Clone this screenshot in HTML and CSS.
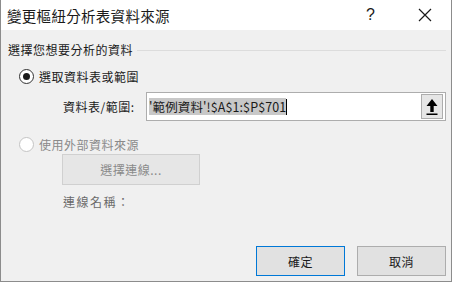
FILE: index.html
```html
<!DOCTYPE html>
<html lang="zh-Hant">
<head>
<meta charset="utf-8">
<link rel="stylesheet" href="styles.css">
</head>
<body>
<div class="dialog">
  <div class="titlebar">
    <span class="title">變更樞紐分析表資料來源</span>
    <span class="help">?</span>
    <span class="close">
      <svg width="14" height="14" viewBox="0 0 14 14"><path d="M1 1 L13 13 M13 1 L1 13" stroke="#1a1a1a" stroke-width="1.2" fill="none"/></svg>
    </span>
  </div>
  <div class="content">
    <div class="group-head">
      <span>選擇您想要分析的資料</span>
      <span class="rule"></span>
    </div>
    <div class="radio-row">
      <span class="radio checked"><span class="dot"></span></span>
      <span>選取資料表或範圍</span>
    </div>
    <div class="range-row">
      <span class="range-label">資料表/範圍:</span>
      <div class="range-input">
        <span class="sel">'範例資料'!$A$1:$P$701</span><span class="caret"></span>
        <span class="pick">
          <svg width="14" height="18" viewBox="0 0 14 18"><path d="M7 1 L1.5 8 L5.3 8 L5.3 14 L8.7 14 L8.7 8 L12.5 8 Z" fill="#000"/><rect x="1.5" y="15.5" width="11" height="1.5" fill="#000"/></svg>
        </span>
      </div>
    </div>
    <div class="radio-row disabled">
      <span class="radio"></span>
      <span>使用外部資料來源</span>
    </div>
    <div class="btn conn">選擇連線...</div>
    <div class="conn-name">連線名稱：</div>
    <div class="footer">
      <div class="btn ok">確定</div>
      <div class="btn cancel">取消</div>
    </div>
  </div>
</div>
</body>
</html>
```
FILE: styles.css
```css
html, body {
  margin: 0;
  padding: 0;
  width: 452px;
  height: 282px;
  overflow: hidden;
  font-family: "Noto Sans CJK TC", "Noto Sans", sans-serif;
  color: #1a1a1a;
}
.dialog {
  box-sizing: border-box;
  width: 452px;
  height: 282px;
  border: 1px solid #8c8c8c;
  border-top: none;
  display: flex;
  flex-direction: column;
  background: #f0f0f0;
}
.titlebar {
  height: 30px;
  background: #fff;
  display: flex;
  align-items: center;
  font-size: 14.5px;
  padding-left: 6px;
}
.title { flex: 1; letter-spacing: 0.3px; }
.help {
  font-family: "Liberation Sans", sans-serif;
  font-size: 16px;
  margin-right: 43px;
}
.close { display: flex; margin-right: 19px; }
.content {
  flex: 1;
  display: flex;
  flex-direction: column;
  padding: 10px 5px 5px 7px;
  font-size: 12px;
}
.group-head {
  display: flex;
  align-items: center;
  height: 18px;
  letter-spacing: 0.5px;
}
.rule {
  flex: 1;
  height: 1px;
  background: #dcdcdc;
  margin-left: 4px;
  margin-top: 2px;
}
.radio-row {
  display: flex;
  align-items: center;
  height: 20px;
  margin-top: 8px;
  padding-left: 11px;
  gap: 5px;
  letter-spacing: 0.5px;
}
.radio {
  box-sizing: border-box;
  width: 15px;
  height: 15px;
  border-radius: 50%;
  border: 1px solid #333;
  background: #fff;
  display: flex;
  align-items: center;
  justify-content: center;
}
.radio.checked .dot {
  width: 7px;
  height: 7px;
  border-radius: 50%;
  background: #1a1a1a;
}
.disabled { color: #8a8a8a; margin-top: 13px; }
.disabled .radio { border-color: #c4c4c4; }
.range-row {
  display: flex;
  align-items: center;
  margin-top: 6px;
  padding-left: 55px;
}
.range-label { width: 83px; letter-spacing: 0.5px; }
.range-input {
  box-sizing: border-box;
  flex: 1;
  height: 29px;
  background: #fff;
  border: 1px solid #adadad;
  display: flex;
  align-items: center;
  padding-left: 2px;
}
.sel {
  background: #c8c8c8;
  color: #1a1a1a;
  font-size: 12.5px;
  line-height: 17px;
  letter-spacing: 0.1px;
}
.caret {
  width: 1px;
  height: 16px;
  background: #000;
}
.pick {
  box-sizing: border-box;
  margin-left: auto;
  margin-right: 2px;
  width: 22px;
  height: 25px;
  border: 1px solid #adadad;
  background: #e6e6e6;
  display: flex;
  align-items: center;
  justify-content: center;
}
.btn {
  box-sizing: border-box;
  border: 1px solid #adadad;
  background: #e1e1e1;
  display: flex;
  align-items: center;
  justify-content: center;
  letter-spacing: 0.5px;
}
.conn {
  margin-top: 0;
  margin-left: 54px;
  width: 138px;
  height: 31px;
  color: #8a8a8a;
  background: #e6e6e6;
  border-color: #d0d0d0;
}
.conn-name {
  margin-top: 8px;
  margin-left: 55px;
  color: #6a6a6a;
  letter-spacing: 1.5px;
}
.footer {
  display: flex;
  justify-content: flex-end;
  gap: 12px;
  margin-top: auto;
}
.ok, .cancel { width: 89px; height: 30px; }
.ok { border: 1px solid #0078d7; }
```
